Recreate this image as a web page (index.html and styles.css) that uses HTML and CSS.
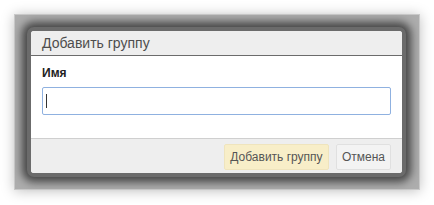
FILE: index.html
```html
<!DOCTYPE html>
<html lang="ru">
<head>
    <meta charset="UTF-8">
    <title>Добавить группу</title>
    <link rel="stylesheet" href="styles.css">
</head>
<body>
    <!-- затемнённая подложка под окном -->
    <div class="overlay">
        <div class="dialog">
            <div class="dialog-title">Добавить группу</div>
            <div class="dialog-body">
                <label class="field-label" for="name">Имя</label>
                <div class="field">
                    <input class="field-input" id="name" type="text">
                    <span class="caret"></span>
                </div>
            </div>
            <div class="dialog-footer">
                <button class="btn btn-primary">Добавить группу</button>
                <button class="btn">Отмена</button>
            </div>
        </div>
    </div>
</body>
</html>
```

FILE: styles.css
```css
* {
  margin: 0;
  padding: 0;
  box-sizing: border-box;
}
body {
  background: #fff;
  padding: 14px;
  font-family: "Liberation Sans", Arial, sans-serif;
}
.overlay {
  width: 406px;
  height: 176px;
  border: 1px solid #c9c9c9;
  background: #adadad;
  box-shadow: 0 1px 12px rgba(0, 0, 0, 0.25);
  padding: 12px 13px 12px 12px;
}
.dialog {
  width: 379px;
  height: 150px;
  border: 4px solid #6b6b6b;
  border-radius: 7px;
  background: #fff;
  overflow: hidden;
  box-shadow: 0 0 9px 5px rgba(0, 0, 0, 0.6);
  display: flex;
  flex-direction: column;
}
.dialog-title {
  height: 25px;
  background: #eee;
  border-bottom: 1px solid #6b6b6b;
  color: #4d4d4d;
  font-size: 14px;
  line-height: 24px;
  padding-left: 11px;
}
.dialog-body {
  height: 82px;
  padding: 9px 11px 0 11px;
  display: flex;
  flex-direction: column;
}
.field-label {
  font-size: 12px;
  font-weight: bold;
  color: #222;
  line-height: 16px;
}
.field {
  position: relative;
  margin-top: 6px;
}
.field-input {
  width: 349px;
  height: 28px;
  border: 1px solid #8fb1e0;
  border-radius: 2px;
  outline: none;
  padding-left: 3px;
  font-size: 13px;
}
.caret {
  position: absolute;
  left: 4px;
  top: 7px;
  width: 1px;
  height: 14px;
  background: #333;
}
.dialog-footer {
  flex: 1;
  background: #eee;
  border-top: 1px solid #cfcfcf;
  display: flex;
  justify-content: flex-end;
  align-items: flex-start;
  gap: 7px;
  padding: 5px 11px 0 0;
}
.btn {
  height: 26px;
  padding: 0 5px;
  border: 1px solid #e0e0e0;
  border-radius: 2px;
  background: #f3f3f3;
  color: #555;
  font: 12px "Liberation Sans", Arial, sans-serif;
  cursor: pointer;
}
.btn-primary {
  width: 105px;
  background: #f8eec8;
  border-color: #efe4bd;
}
```
